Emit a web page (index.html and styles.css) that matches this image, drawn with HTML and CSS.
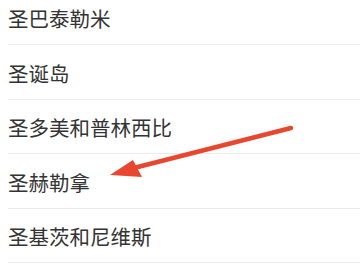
FILE: index.html
```html
<!DOCTYPE html>
<html lang="zh">
<head>
<meta charset="utf-8">
<link rel="stylesheet" href="styles.css">
</head>
<body>
<ul class="list">
  <li class="row">圣巴泰勒米</li>
  <li class="row">圣诞岛</li>
  <li class="row">圣多美和普林西比</li>
  <li class="row">圣赫勒拿</li>
  <li class="row">圣基茨和尼维斯</li>
</ul>
<svg class="arrow" width="360" height="270" viewBox="0 0 360 270">
  <line x1="291" y1="128" x2="126" y2="170" stroke="#e8472f" stroke-width="4.5" stroke-linecap="round"/>
  <polygon points="110,175 133,160 142,177" fill="#e8472f"/>
</svg>
</body>
</html>
```
FILE: styles.css
```css
html, body {
  margin: 0;
  padding: 0;
  background: #ffffff;
  width: 360px;
  height: 270px;
  overflow: hidden;
}
.list {
  list-style: none;
  margin: -9.5px 0 0 0;
  padding: 0 0 0 8px;
}
.row {
  height: 54.5px;
  box-sizing: border-box;
  padding-top: 2px;
  border-bottom: 1px solid #ebebeb;
  display: flex;
  align-items: center;
  font-family: "Noto Sans CJK SC", "Noto Sans", sans-serif;
  font-size: 20.5px;
  color: #333333;
  line-height: 1;
}
.arrow {
  position: absolute;
  left: 0;
  top: 0;
}
```
